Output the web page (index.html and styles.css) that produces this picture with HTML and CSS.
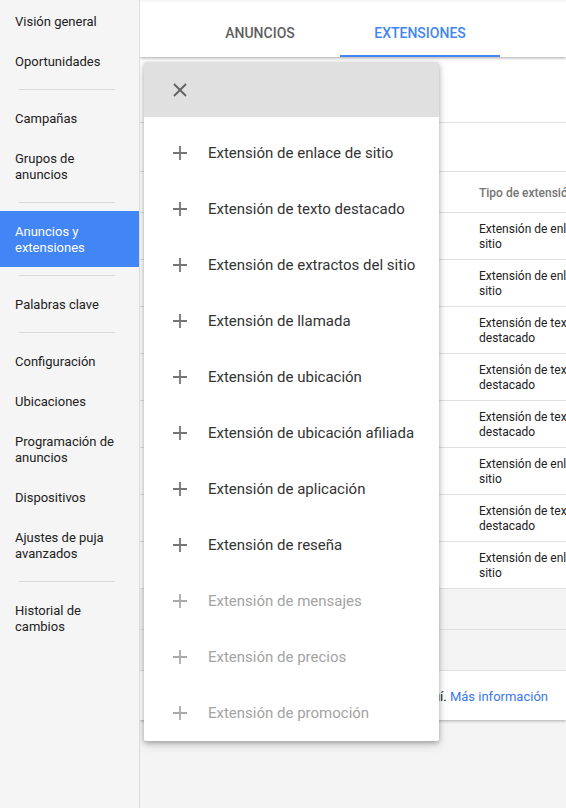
FILE: index.html
```html
<!DOCTYPE html>
<html lang="es">
<head>
<meta charset="utf-8">
<title>Anuncios y extensiones</title>
<link rel="stylesheet" href="styles.css">
</head>
<body>
<div class="app">
  <nav class="sidebar">
    <a class="nav-item">Visión general</a>
    <a class="nav-item">Oportunidades</a>
    <div class="nav-divider"></div>
    <a class="nav-item">Campañas</a>
    <a class="nav-item">Grupos de anuncios</a>
    <div class="nav-divider"></div>
    <a class="nav-item active">Anuncios y extensiones</a>
    <div class="nav-divider"></div>
    <a class="nav-item">Palabras clave</a>
    <div class="nav-divider"></div>
    <a class="nav-item">Configuración</a>
    <a class="nav-item">Ubicaciones</a>
    <a class="nav-item">Programación de anuncios</a>
    <a class="nav-item">Dispositivos</a>
    <a class="nav-item">Ajustes de puja avanzados</a>
    <div class="nav-divider"></div>
    <a class="nav-item">Historial de cambios</a>
  </nav>

  <main class="main">
    <header class="tabs">
      <div class="tab">ANUNCIOS</div>
      <div class="tab active">EXTENSIONES</div>
    </header>

    <section class="card">
      <div class="toolbar"></div>
      <div class="filter-bar"></div>
      <div class="trow thead">
        <div class="cell">Extensión</div>
        <div class="cell">Tipo de extensión</div>
        <div class="cell">Nivel</div>
      </div>
      <div class="trow">
        <div class="cell">Ofertas</div>
        <div class="cell">Extensión de enlace de sitio</div>
        <div class="cell">Campaña</div>
      </div>
      <div class="trow">
        <div class="cell">Contacto</div>
        <div class="cell">Extensión de enlace de sitio</div>
        <div class="cell">Campaña</div>
      </div>
      <div class="trow">
        <div class="cell">Envío gratis</div>
        <div class="cell">Extensión de texto destacado</div>
        <div class="cell">Cuenta</div>
      </div>
      <div class="trow">
        <div class="cell">Atención 24 h</div>
        <div class="cell">Extensión de texto destacado</div>
        <div class="cell">Cuenta</div>
      </div>
      <div class="trow">
        <div class="cell">Precios bajos</div>
        <div class="cell">Extensión de texto destacado</div>
        <div class="cell">Cuenta</div>
      </div>
      <div class="trow">
        <div class="cell">Tienda</div>
        <div class="cell">Extensión de enlace de sitio</div>
        <div class="cell">Campaña</div>
      </div>
      <div class="trow">
        <div class="cell">Calidad</div>
        <div class="cell">Extensión de texto destacado</div>
        <div class="cell">Cuenta</div>
      </div>
      <div class="trow">
        <div class="cell">Blog</div>
        <div class="cell">Extensión de enlace de sitio</div>
        <div class="cell">Campaña</div>
      </div>
      <div class="trow total"></div>
      <div class="trow total"></div>
      <div class="card-footer">
        <span class="note">Las extensiones de la cuenta se muestran aquí. <a class="link">Más información</a></span>
      </div>
    </section>

    <div class="menu">
      <div class="menu-head">
        <svg class="icon close" viewBox="0 0 14 14" width="14" height="14"><path d="M1 1L13 13M13 1L1 13" /></svg>
      </div>
      <ul class="menu-list">
        <li class="menu-item"><svg class="icon plus" viewBox="0 0 14 14" width="14" height="14"><path d="M7 0V14M0 7H14"/></svg><span>Extensión de enlace de sitio</span></li>
        <li class="menu-item"><svg class="icon plus" viewBox="0 0 14 14" width="14" height="14"><path d="M7 0V14M0 7H14"/></svg><span>Extensión de texto destacado</span></li>
        <li class="menu-item"><svg class="icon plus" viewBox="0 0 14 14" width="14" height="14"><path d="M7 0V14M0 7H14"/></svg><span>Extensión de extractos del sitio</span></li>
        <li class="menu-item"><svg class="icon plus" viewBox="0 0 14 14" width="14" height="14"><path d="M7 0V14M0 7H14"/></svg><span>Extensión de llamada</span></li>
        <li class="menu-item"><svg class="icon plus" viewBox="0 0 14 14" width="14" height="14"><path d="M7 0V14M0 7H14"/></svg><span>Extensión de ubicación</span></li>
        <li class="menu-item"><svg class="icon plus" viewBox="0 0 14 14" width="14" height="14"><path d="M7 0V14M0 7H14"/></svg><span>Extensión de ubicación afiliada</span></li>
        <li class="menu-item"><svg class="icon plus" viewBox="0 0 14 14" width="14" height="14"><path d="M7 0V14M0 7H14"/></svg><span>Extensión de aplicación</span></li>
        <li class="menu-item"><svg class="icon plus" viewBox="0 0 14 14" width="14" height="14"><path d="M7 0V14M0 7H14"/></svg><span>Extensión de reseña</span></li>
        <li class="menu-item disabled"><svg class="icon plus" viewBox="0 0 14 14" width="14" height="14"><path d="M7 0V14M0 7H14"/></svg><span>Extensión de mensajes</span></li>
        <li class="menu-item disabled"><svg class="icon plus" viewBox="0 0 14 14" width="14" height="14"><path d="M7 0V14M0 7H14"/></svg><span>Extensión de precios</span></li>
        <li class="menu-item disabled"><svg class="icon plus" viewBox="0 0 14 14" width="14" height="14"><path d="M7 0V14M0 7H14"/></svg><span>Extensión de promoción</span></li>
      </ul>
    </div>
  </main>
</div>
</body>
</html>
```

FILE: styles.css
```css
* { box-sizing: border-box; }

html, body {
  margin: 0;
  padding: 0;
  height: 100%;
  overflow: hidden;
}

body {
  font-family: Roboto, "Liberation Sans", Arial, sans-serif;
  color: #212121;
  background: #f4f4f4;
}

.app {
  display: flex;
  height: 808px;
}

/* Sidebar */
.sidebar {
  width: 140px;
  flex: 0 0 140px;
  background: #f5f5f5;
  border-right: 1px solid #dcdcdc;
  padding-top: 1px;
  display: flex;
  flex-direction: column;
}

.nav-item {
  display: block;
  padding: 13px 24px 11px 15px;
  font-size: 13px;
  line-height: 16px;
  color: #212121;
}

.nav-item.active {
  background: #4285f4;
  color: #fff;
}

.nav-divider {
  height: 1px;
  background: #dadada;
  margin: 8px 24px 8px 19px;
}

/* Main */
.main {
  flex: 1;
  min-width: 0;
  position: relative;
  background: #f4f4f4;
  overflow: hidden;
  display: flex;
  flex-direction: column;
}

.tabs {
  height: 57px;
  flex: 0 0 57px;
  background: #fff;
  display: flex;
  padding-left: 40px;
  position: relative;
  z-index: 1;
  box-shadow: 0 1px 3px rgba(0,0,0,0.35), inset 0 3px 3px -2px rgba(0,0,0,0.06);
}

.tab {
  width: 160px;
  display: flex;
  align-items: center;
  justify-content: center;
  padding-top: 11px;
  font-size: 14px;
  font-weight: 500;
  color: #5f5f5f;
  border-bottom: 2px solid transparent;
}

.tab.active {
  color: #4285f4;
  border-bottom-color: #4285f4;
}

/* Card with table */
.card {
  background: #fff;
  box-shadow: 0 1px 3px rgba(0,0,0,0.3);
  overflow: hidden;
}

.toolbar {
  height: 66px;
  border-bottom: 1px solid #e0e0e0;
}

.filter-bar {
  height: 49px;
  border-bottom: 1px solid #e0e0e0;
}

.trow {
  display: grid;
  grid-template-columns: 339px 140px 120px;
  height: 47px;
  border-bottom: 1px solid #e0e0e0;
  align-items: center;
  font-size: 12px;
  line-height: 15px;
  color: #212121;
}

.trow .cell {
  overflow: hidden;
  padding-top: 2px;
}

.trow .cell:first-child {
  padding-left: 60px;
}

.trow.thead {
  height: 41px;
  color: #757575;
  font-weight: 500;
}

.trow.thead .cell {
  white-space: nowrap;
}

.trow.total {
  height: 41px;
  background: #f4f4f4;
}

.card-footer {
  height: 49px;
  display: flex;
  align-items: center;
  justify-content: flex-end;
  padding-right: 18px;
  padding-top: 1px;
  white-space: nowrap;
  font-size: 13px;
  color: #212121;
}

.link {
  color: #3b78e7;
}

/* Popup menu */
.menu {
  position: absolute;
  left: 4px;
  top: 62px;
  width: 295px;
  background: #fff;
  border-radius: 2px;
  box-shadow: 0 2px 5px rgba(0,0,0,0.28), 0 4px 12px rgba(0,0,0,0.12);
  z-index: 2;
  overflow: hidden;
}

.menu-head {
  height: 55px;
  background: #e0e0e0;
  display: flex;
  align-items: center;
  padding-left: 29px;
}

.icon {
  display: block;
  flex: 0 0 14px;
  fill: none;
  stroke-width: 1.8;
}

.close {
  stroke: #616161;
}

.menu-list {
  list-style: none;
  margin: 0;
  padding: 8px 0 0;
}

.menu-item {
  height: 56px;
  display: flex;
  align-items: center;
  gap: 21px;
  padding-left: 29px;
  font-size: 15px;
  color: #333;
}

.menu-item .plus {
  stroke: #757575;
}

.menu-item.disabled {
  color: #a3a3a3;
}

.menu-item.disabled .plus {
  stroke: #ababab;
}
```
